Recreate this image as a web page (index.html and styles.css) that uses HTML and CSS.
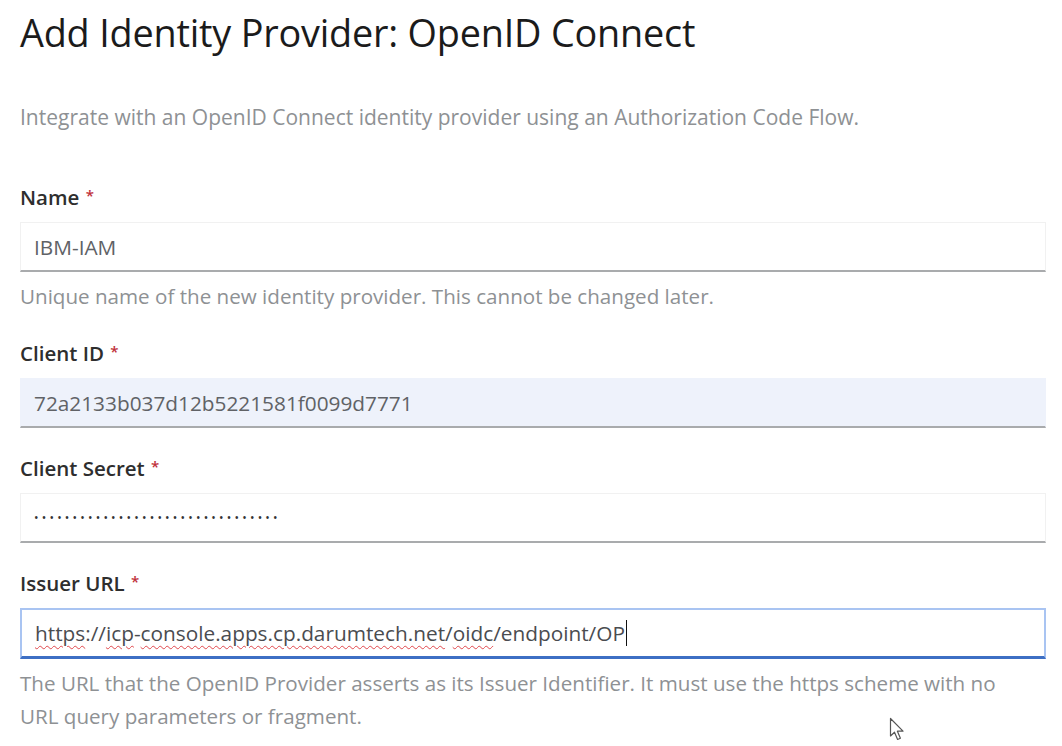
FILE: index.html
```html
<!DOCTYPE html>
<html lang="en">
<head>
<meta charset="utf-8">
<title>Add Identity Provider: OpenID Connect</title>
<link rel="stylesheet" href="styles.css">
</head>
<body>
<main class="page">
  <h1 class="title">Add Identity Provider: OpenID Connect</h1>
  <p class="intro">Integrate with an OpenID Connect identity provider using an Authorization Code Flow.</p>

  <form class="form">
    <div class="group">
      <label class="label">Name <span class="req">*</span></label>
      <div class="field">IBM-IAM</div>
      <p class="help">Unique name of the new identity provider. This cannot be changed later.</p>
    </div>

    <div class="group">
      <label class="label">Client ID <span class="req">*</span></label>
      <div class="field autofill">72a2133b037d12b5221581f0099d7771</div>
    </div>

    <div class="group">
      <label class="label">Client Secret <span class="req">*</span></label>
      <div class="field secret">••••••••••••••••••••••••••••••••</div>
    </div>

    <div class="group">
      <label class="label">Issuer URL <span class="req">*</span></label>
      <div class="field focus"><span class="sp">https</span>://<span class="sp">icp</span>-<span class="sp">console.apps.cp.darumtech.net</span>/<span class="sp">oidc</span>/endpoint/OP<span class="caret"></span></div>
      <p class="help">The URL that the OpenID Provider asserts as its Issuer Identifier. It must use the https scheme with no URL query parameters or fragment.</p>
    </div>
  </form>

  <svg class="pointer" width="18" height="26" viewBox="0 0 18 26" aria-hidden="true">
    <path d="M1.5 1.5 L1.5 19 L5.5 15.2 L8.6 22.5 L11.4 21.3 L8.4 14.2 L14 14.2 Z" fill="#fff" stroke="#555" stroke-width="1.2" stroke-linejoin="round"/>
  </svg>
</main>
</body>
</html>
```

FILE: styles.css
```css
* { box-sizing: border-box; }

html, body {
  margin: 0;
  padding: 0;
  background: #ffffff;
}

body {
  font-family: "Open Sans", "Liberation Sans", sans-serif;
  color: #151515;
}

.page {
  position: relative;
  width: 1062px;
  height: 746px;
  padding: 8px 16px 0 20px;
  overflow: hidden;
}

.title {
  margin: 0;
  font-size: 37.8px;
  font-weight: 400;
  line-height: 50px;
  color: #1b1b1b;
  letter-spacing: -0.2px;
}

.intro {
  margin: 45px 0 0;
  font-size: 21px;
  line-height: 28px;
  color: #8e9194;
}

.form {
  margin-top: 51px;
  display: flex;
  flex-direction: column;
  gap: 25px;
}

.group {
  display: flex;
  flex-direction: column;
}

.label {
  font-size: 20.5px;
  font-weight: 600;
  line-height: 26px;
  color: #2e2e2e;
  margin-bottom: 12px;
}

.req {
  color: #c0303a;
  font-size: 15px;
  font-weight: 600;
  vertical-align: 4px;
  margin-left: 1px;
}

.field {
  height: 50px;
  padding: 0 13px;
  display: flex;
  align-items: center;
  font-size: 20.8px;
  color: #606266;
  background: #ffffff;
  border: 1px solid #f1f1f1;
  border-bottom: 2px solid #a9abad;
  white-space: nowrap;
}

.field.autofill {
  background: #eef2fb;
  border-color: #eef2fb;
  border-bottom-color: #a9abad;
}

.field.secret {
  font-size: 12px;
  letter-spacing: 3.2px;
  color: #333;
}

.field.focus {
  height: 51px;
  border: 2px solid #a9c4f2;
  border-bottom: 3px solid #3d6fc4;
  padding-left: 13px;
  color: #4a4c50;
}

.sp {
  text-decoration: underline wavy #e0474c;
  text-decoration-thickness: 1px;
  text-underline-offset: 4px;
}

.caret {
  display: inline-block;
  width: 1.5px;
  height: 26px;
  background: #111;
  margin-left: 1px;
}

.help {
  margin: 8px 0 0;
  max-width: 1000px;
  font-size: 20.6px;
  line-height: 33px;
  color: #8e9194;
}

.pointer {
  position: absolute;
  left: 889px;
  top: 717px;
}
```
